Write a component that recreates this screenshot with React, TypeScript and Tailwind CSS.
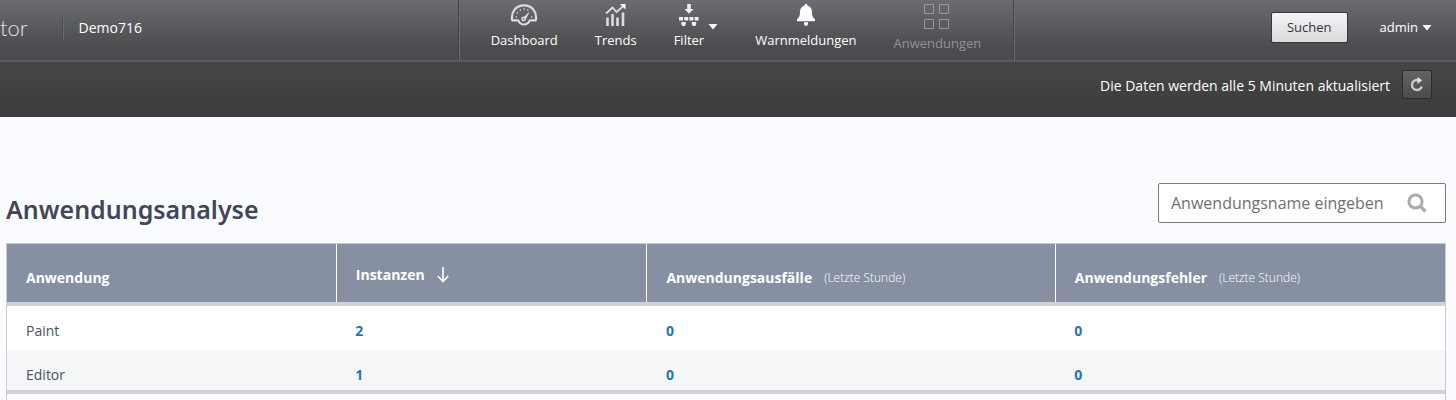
import { clsx } from "clsx";
import type { ReactNode } from "react";

type NavItem = {
  label: string;
  icon: ReactNode;
  hasMenu?: boolean;
  disabled?: boolean;
};

type AppRow = {
  name: string;
  instances: number;
  faults: number;
  errors: number;
};

const rows: AppRow[] = [
  { name: "Paint", instances: 2, faults: 0, errors: 0 },
  { name: "Editor", instances: 1, faults: 0, errors: 0 },
];

function GaugeIcon() {
  return (
    <svg width="28" height="22" viewBox="0 0 28 22" fill="none" aria-hidden="true">
      <path
        d="M2.2 16.4C.8 7.6 6 1.4 14 1.4S27.2 7.6 25.8 16.4H19.8C18.6 19 16.6 20.5 14 20.5S9.4 19 8.2 16.4Z"
        stroke="#dcdddf"
        strokeWidth="2.2"
        strokeLinejoin="round"
      />
      <path d="M12.4 14.6L19.6 7.4L15.6 16Z" fill="#dcdddf" />
      <circle cx="13.6" cy="15" r="2.4" fill="#dcdddf" />
      <circle cx="13.6" cy="15" r="0.8" fill="#5c5e62" />
      <g fill="#dcdddf">
        <circle cx="6.2" cy="13" r="0.8" />
        <circle cx="7.4" cy="8.8" r="0.8" />
        <circle cx="10.4" cy="6" r="0.8" />
        <circle cx="14.2" cy="5" r="0.8" />
        <circle cx="17.8" cy="6" r="0.8" />
        <circle cx="21.8" cy="13" r="0.8" />
      </g>
    </svg>
  );
}

function TrendsIcon() {
  return (
    <svg width="22" height="22" viewBox="0 0 22 22" fill="none" aria-hidden="true">
      <path d="M1 9.5L7.5 3.5L11.5 8L18.5 2" stroke="#dcdddf" strokeWidth="1.8" />
      <path d="M15 0H20.5V5.5Z" fill="#ffffff" />
      <path d="M2.5 22V13.5M7.5 22V10M12.5 22V13.5M18 22V8.5" stroke="#dcdddf" strokeWidth="2.6" />
    </svg>
  );
}

function FilterIcon() {
  return (
    <svg width="20" height="22" viewBox="0 0 20 22" fill="#f0f0f1" aria-hidden="true">
      <path d="M8.2 0H11.8V5H14.6L10 9.8L5.4 5H8.2Z" />
      <path d="M0 13H4V16.6H0ZM5.2 13H9.2V16.6H5.2ZM10.4 13H14.4V16.6H10.4ZM15.6 13H19.6V16.6H15.6Z" />
      <path d="M2.4 18H6.8V20.2L5.8 22H3.4L2.4 20.2ZM12.8 18H17.2V20.2L16.2 22H13.8L12.8 20.2Z" />
    </svg>
  );
}

function BellIcon() {
  return (
    <svg width="20" height="22" viewBox="0 0 20 22" fill="#ffffff" aria-hidden="true">
      <path d="M8.6 1.4C8.6-.4 11.4-.4 11.4 1.4C14.6 2.2 16 4.8 16 8C16 11.8 16.6 13.4 19 15.2V17.2H1V15.2C3.4 13.4 4 11.8 4 8C4 4.8 5.4 2.2 8.6 1.4Z" />
      <path d="M8 18.2H12V19.8C12 22.6 8 22.6 8 19.8Z" />
    </svg>
  );
}

function GridIcon() {
  return (
    <svg width="26" height="25" viewBox="0 0 26 25" fill="none" stroke="#97989b" aria-hidden="true">
      <path d="M.5 .5H9.5V9.5H.5ZM15.5 .5H24.5V9.5H15.5ZM.5 15.5H9.5V24.5H.5ZM15.5 15.5H24.5V24.5H15.5Z" />
    </svg>
  );
}

function Caret() {
  return (
    <svg width="10" height="6" viewBox="0 0 10 6" fill="#ffffff" aria-hidden="true">
      <path d="M.5 0H9.5L5 5.5Z" />
    </svg>
  );
}

const navItems: NavItem[] = [
  { label: "Dashboard", icon: <GaugeIcon /> },
  { label: "Trends", icon: <TrendsIcon /> },
  { label: "Filter", icon: <FilterIcon />, hasMenu: true },
  { label: "Warnmeldungen", icon: <BellIcon /> },
  { label: "Anwendungen", icon: <GridIcon />, disabled: true },
];

function TopBar() {
  return (
    <header className="flex h-[62px] border-b-2 border-[#5a5b5f] bg-linear-to-b from-[#6a6c70] to-[#4c4c4f] to-80% text-white">
      <div className="flex flex-[458] items-start gap-[34px]">
        <span className="pt-2 font-['Lato',sans-serif] text-[22px] leading-10 font-light text-[#e0e1e3]">tor</span>
        <span className="mt-4 h-6 border-l border-[#48494c] pl-4 text-[14px] leading-6 shadow-[inset_1px_0_0_#6b6c70]">
          Demo716
        </span>
      </div>

      <nav className="flex shrink-0 items-start gap-[37px] border-x border-[#434447] px-8 pt-1 shadow-[inset_1px_0_0_#6b6c70,1px_0_0_#6b6c70]">
        {navItems.map((item) => (
          <button
            key={item.label}
            type="button"
            disabled={item.disabled}
            className={clsx("flex items-start gap-1", item.disabled && "text-[#919296]")}
          >
            <span className="flex flex-col items-center gap-1">
              {item.icon}
              <span className="text-[13px] leading-5">{item.label}</span>
            </span>
            {item.hasMenu && (
              <span className="pt-5">
                <Caret />
              </span>
            )}
          </button>
        ))}
      </nav>

      <div className="flex flex-[418] items-start justify-end gap-8 pt-3 pr-6">
        <button
          type="button"
          className="h-[31px] rounded-xs border border-[#37383b] bg-linear-to-b from-[#f4f4f5] to-[#d9dadc] px-[15px] text-[13px] text-[#333438]"
        >
          Suchen
        </button>
        <button type="button" className="flex h-8 items-center gap-1 text-[13px]">
          admin
          <Caret />
        </button>
      </div>
    </header>
  );
}

function RefreshBar() {
  return (
    <div className="flex h-[55px] items-start justify-end gap-3 bg-linear-to-b from-[#464646] to-[#3c3c3c] pt-2 pr-6 text-white">
      <p className="text-[14px] leading-8">Die Daten werden alle 5 Minuten aktualisiert</p>
      <button
        type="button"
        aria-label="Aktualisieren"
        className="flex h-[29px] w-[30px] items-center justify-center rounded-xs border border-[#2b2b2b] bg-linear-to-b from-[#636363] to-[#4b4b4b]"
      >
        <svg width="14" height="15" viewBox="0 0 14 15" fill="none" aria-hidden="true">
          <path d="M8.5 3H6.8A5 5 0 1 0 11.8 9.5" stroke="#c9c9c9" strokeWidth="2.4" />
          <path d="M7.5 0L12.2 3.2L7.5 7Z" fill="#e0e0e0" />
        </svg>
      </button>
    </div>
  );
}

function HeaderCell({ title, note, sorted }: { title: string; note?: string; sorted?: boolean }) {
  return (
    <th
      scope="col"
      aria-sort={sorted ? "descending" : undefined}
      className={clsx(
        "border-l border-white px-[19px] text-left font-bold first:border-l-0",
        sorted ? "pt-1" : "pt-2.5",
      )}
    >
      <span className="flex items-center gap-3">
        <span className="text-[14px] leading-5">{title}</span>
        {note && <span className="text-[12px] leading-5 font-light">{note}</span>}
        {sorted && (
          <svg width="12" height="16" viewBox="0 0 12 16" fill="none" stroke="#ffffff" strokeWidth="1.6" aria-hidden="true">
            <path d="M6 0V14.5M.8 9L6 14.5L11.2 9" />
          </svg>
        )}
      </span>
    </th>
  );
}

function CountCell({ value }: { value: number }) {
  return (
    <td className="px-[19px] pt-[15px] align-top">
      <a href="#" className="font-bold text-[#2277b3]">
        {value}
      </a>
    </td>
  );
}

export default function App() {
  return (
    <div className="flex min-h-screen flex-col bg-[#fbfcff] font-['Open_Sans','Noto_Sans',sans-serif]">
      <TopBar />
      <RefreshBar />

      <main className="flex flex-1 flex-col pt-[66px] pr-2.5 pl-1.5">
        <div className="mb-4 flex items-start justify-between">
          <h1 className="pt-2 font-['Noto_Sans',sans-serif] text-[25px] leading-9 font-semibold text-[#424757]">
            Anwendungsanalyse
          </h1>
          <label className="flex h-10 w-72 items-center rounded-xs border border-[#77787b] bg-white pr-[18px] pl-3">
            <input
              type="text"
              aria-label="Anwendungsname eingeben"
              placeholder="Anwendungsname eingeben"
              className="min-w-0 flex-1 text-[16px] text-[#505157] outline-none placeholder:text-[#6e6f73]"
            />
            <svg width="20" height="20" viewBox="0 0 20 20" fill="none" stroke="#acacac" aria-hidden="true">
              <circle cx="8.5" cy="8.5" r="6.6" strokeWidth="3" />
              <path d="M13.5 13.5L18.5 18.5" strokeWidth="3.4" />
            </svg>
          </label>
        </div>

        <div className="flex flex-1 flex-col border border-b-0 border-[#c9cbcf]">
          <table className="w-full table-fixed border-collapse text-[14px] leading-5">
            <colgroup>
              <col className="w-[22.9%]" />
              <col className="w-[21.6%]" />
              <col className="w-[28.4%]" />
              <col />
            </colgroup>
            <thead>
              <tr className="h-[60px] bg-[#8690a2] text-white">
                <HeaderCell title="Anwendung" />
                <HeaderCell title="Instanzen" sorted />
                <HeaderCell title="Anwendungsausfälle" note="(Letzte Stunde)" />
                <HeaderCell title="Anwendungsfehler" note="(Letzte Stunde)" />
              </tr>
            </thead>
            <tbody className="border-y-4 border-[#d0d2d4]">
              {rows.map((row) => (
                <tr key={row.name} className="h-[46px] bg-white last:h-[42px] even:bg-[#f5f6f8]">
                  <td className="px-[19px] pt-[15px] align-top text-[#4c515e]">{row.name}</td>
                  <CountCell value={row.instances} />
                  <CountCell value={row.faults} />
                  <CountCell value={row.errors} />
                </tr>
              ))}
            </tbody>
          </table>
        </div>
      </main>
    </div>
  );
}
